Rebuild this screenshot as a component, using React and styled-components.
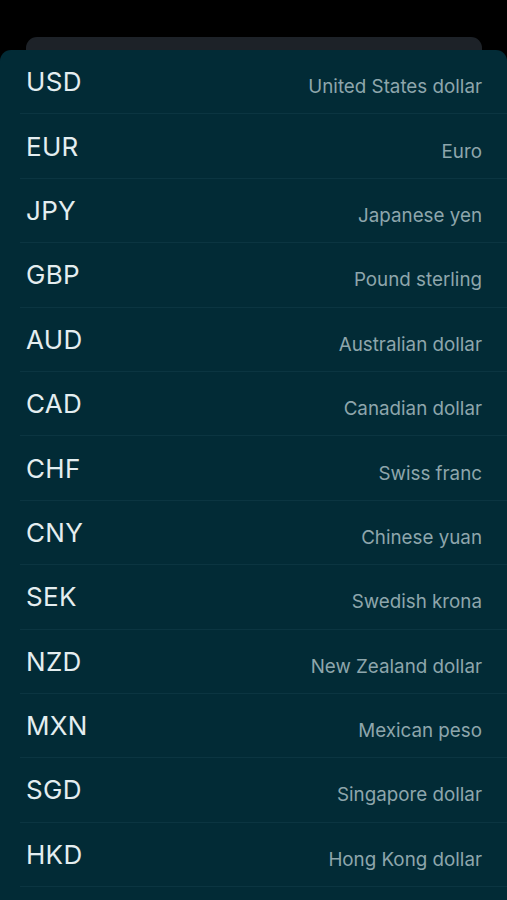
import React from "react";
import styled, { createGlobalStyle } from "styled-components";

const Global = createGlobalStyle`
  html, body { margin: 0; padding: 0; background: #000; }
  body { font-family: Inter, "Noto Sans", sans-serif; -webkit-font-smoothing: antialiased; }
`;

const Screen = styled.div`
  width: 507px;
  height: 900px;
  background: #000;
  overflow: hidden;
  display: flex;
  flex-direction: column;
  padding-top: 37px;
  box-sizing: border-box;
`;

const BackSheet = styled.div`
  flex-shrink: 0;
  margin: 0 25px -13px 26px;
  height: 26px;
  background: #1d2228;
  border-radius: 11px 11px 0 0;
`;

const Sheet = styled.div`
  flex: 1;
  min-height: 0;
  overflow: hidden;
  background: #022b36;
  border-radius: 11px 11px 0 0;
  position: relative;
`;

const List = styled.ul`
  list-style: none;
  margin: 0;
  padding: 0 0 0 20px;
`;

const Row = styled.li`
  height: 63.4px;
  border-bottom: 1px solid #0b3541;
  display: flex;
  align-items: center;
  justify-content: space-between;
  padding: 0 25px 0 6px;
  box-sizing: content-box;
`;

const Code = styled.span`
  font-size: 26px;
  color: #e4eef0;
  letter-spacing: 0.3px;
`;

const Name = styled.span`
  font-size: 18.8px;
  color: #8ea6ac;
  margin-top: 10px;
`;

const data = [
  ["USD", "United States dollar"],
  ["EUR", "Euro"],
  ["JPY", "Japanese yen"],
  ["GBP", "Pound sterling"],
  ["AUD", "Australian dollar"],
  ["CAD", "Canadian dollar"],
  ["CHF", "Swiss franc"],
  ["CNY", "Chinese yuan"],
  ["SEK", "Swedish krona"],
  ["NZD", "New Zealand dollar"],
  ["MXN", "Mexican peso"],
  ["SGD", "Singapore dollar"],
  ["HKD", "Hong Kong dollar"],
];

export default function App() {
  return (
    <>
      <Global />
      <Screen>
        <BackSheet />
        <Sheet>
          <List>
            {data.map(([c, n]) => (
              <Row key={c}>
                <Code>{c}</Code>
                <Name>{n}</Name>
              </Row>
            ))}
          </List>
        </Sheet>
      </Screen>
    </>
  );
}
